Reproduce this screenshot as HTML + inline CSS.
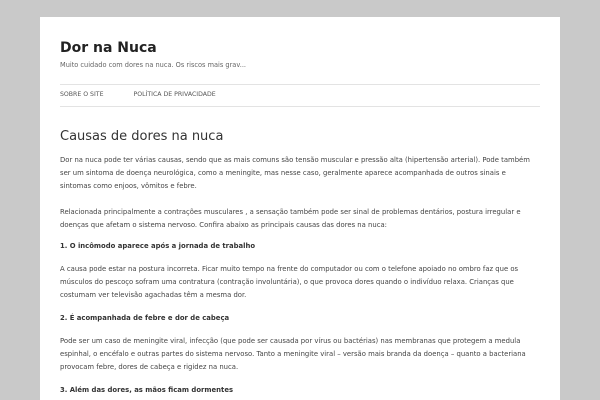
<!DOCTYPE html>
<html><head><meta charset="utf-8"><style>
html,body{margin:0;padding:0;background:#c9c9c9;width:600px;height:400px;overflow:hidden}
body{font-family:"DejaVu Sans","Liberation Sans",sans-serif;color:#444}
.page{position:absolute;left:40px;top:17px;width:520px;height:383px;background:#fff;overflow:hidden}
h1{position:absolute;left:20px;top:22px;margin:0;font-size:14px;font-weight:bold;color:#222;line-height:18px}
.desc{position:absolute;left:20px;top:44px;font-size:6.6px;color:#666}
.hr{position:absolute;left:20px;width:480px;height:1px;background:#e3e3e3}
.nav{position:absolute;top:74px;font-size:6.2px;color:#555;left:20px}
.nav span{margin-right:30px}
h2{position:absolute;left:20px;top:112px;margin:0;font-size:13px;font-weight:normal;color:#333;line-height:16px}
.c{position:absolute;left:20px;top:137px;font-size:6.85px;line-height:13px;color:#444;white-space:nowrap}
.c p{margin:0 0 10px}
.c p.a{margin-bottom:13px}
.c b{color:#333}
</style></head><body><div class="page">
<h1>Dor na Nuca</h1>
<div class="desc">Muito cuidado com dores na nuca. Os riscos mais grav...</div>
<div class="hr" style="top:67px"></div>
<div class="nav"><span>SOBRE O SITE</span><span>POLÍTICA DE PRIVACIDADE</span></div>
<div class="hr" style="top:89px"></div>
<h2>Causas de dores na nuca</h2>
<div class="c">
<p class="a">Dor na nuca pode ter várias causas, sendo que as mais comuns são tensão muscular e pressão alta (hipertensão arterial). Pode também<br>ser um sintoma de doença neurológica, como a meningite, mas nesse caso, geralmente aparece acompanhada de outros sinais e<br>sintomas como enjoos, vômitos e febre.</p>
<p style="margin-bottom:8px">Relacionada principalmente a contrações musculares , a sensação também pode ser sinal de problemas dentários, postura irregular e<br>doenças que afetam o sistema nervoso. Confira abaixo as principais causas das dores na nuca:</p>
<p><b>1. O incômodo aparece após a jornada de trabalho</b></p>
<p>A causa pode estar na postura incorreta. Ficar muito tempo na frente do computador ou com o telefone apoiado no ombro faz que os<br>músculos do pescoço sofram uma contratura (contração involuntária), o que provoca dores quando o indivíduo relaxa. Crianças que<br>costumam ver televisão agachadas têm a mesma dor.</p>
<p><b>2. É acompanhada de febre e dor de cabeça</b></p>
<p>Pode ser um caso de meningite viral, infecção (que pode ser causada por vírus ou bactérias) nas membranas que protegem a medula<br>espinhal, o encéfalo e outras partes do sistema nervoso. Tanto a meningite viral – versão mais branda da doença – quanto a bacteriana<br>provocam febre, dores de cabeça e rigidez na nuca.</p>
<p><b>3. Além das dores, as mãos ficam dormentes</b></p>
</div>
</div></body></html>
